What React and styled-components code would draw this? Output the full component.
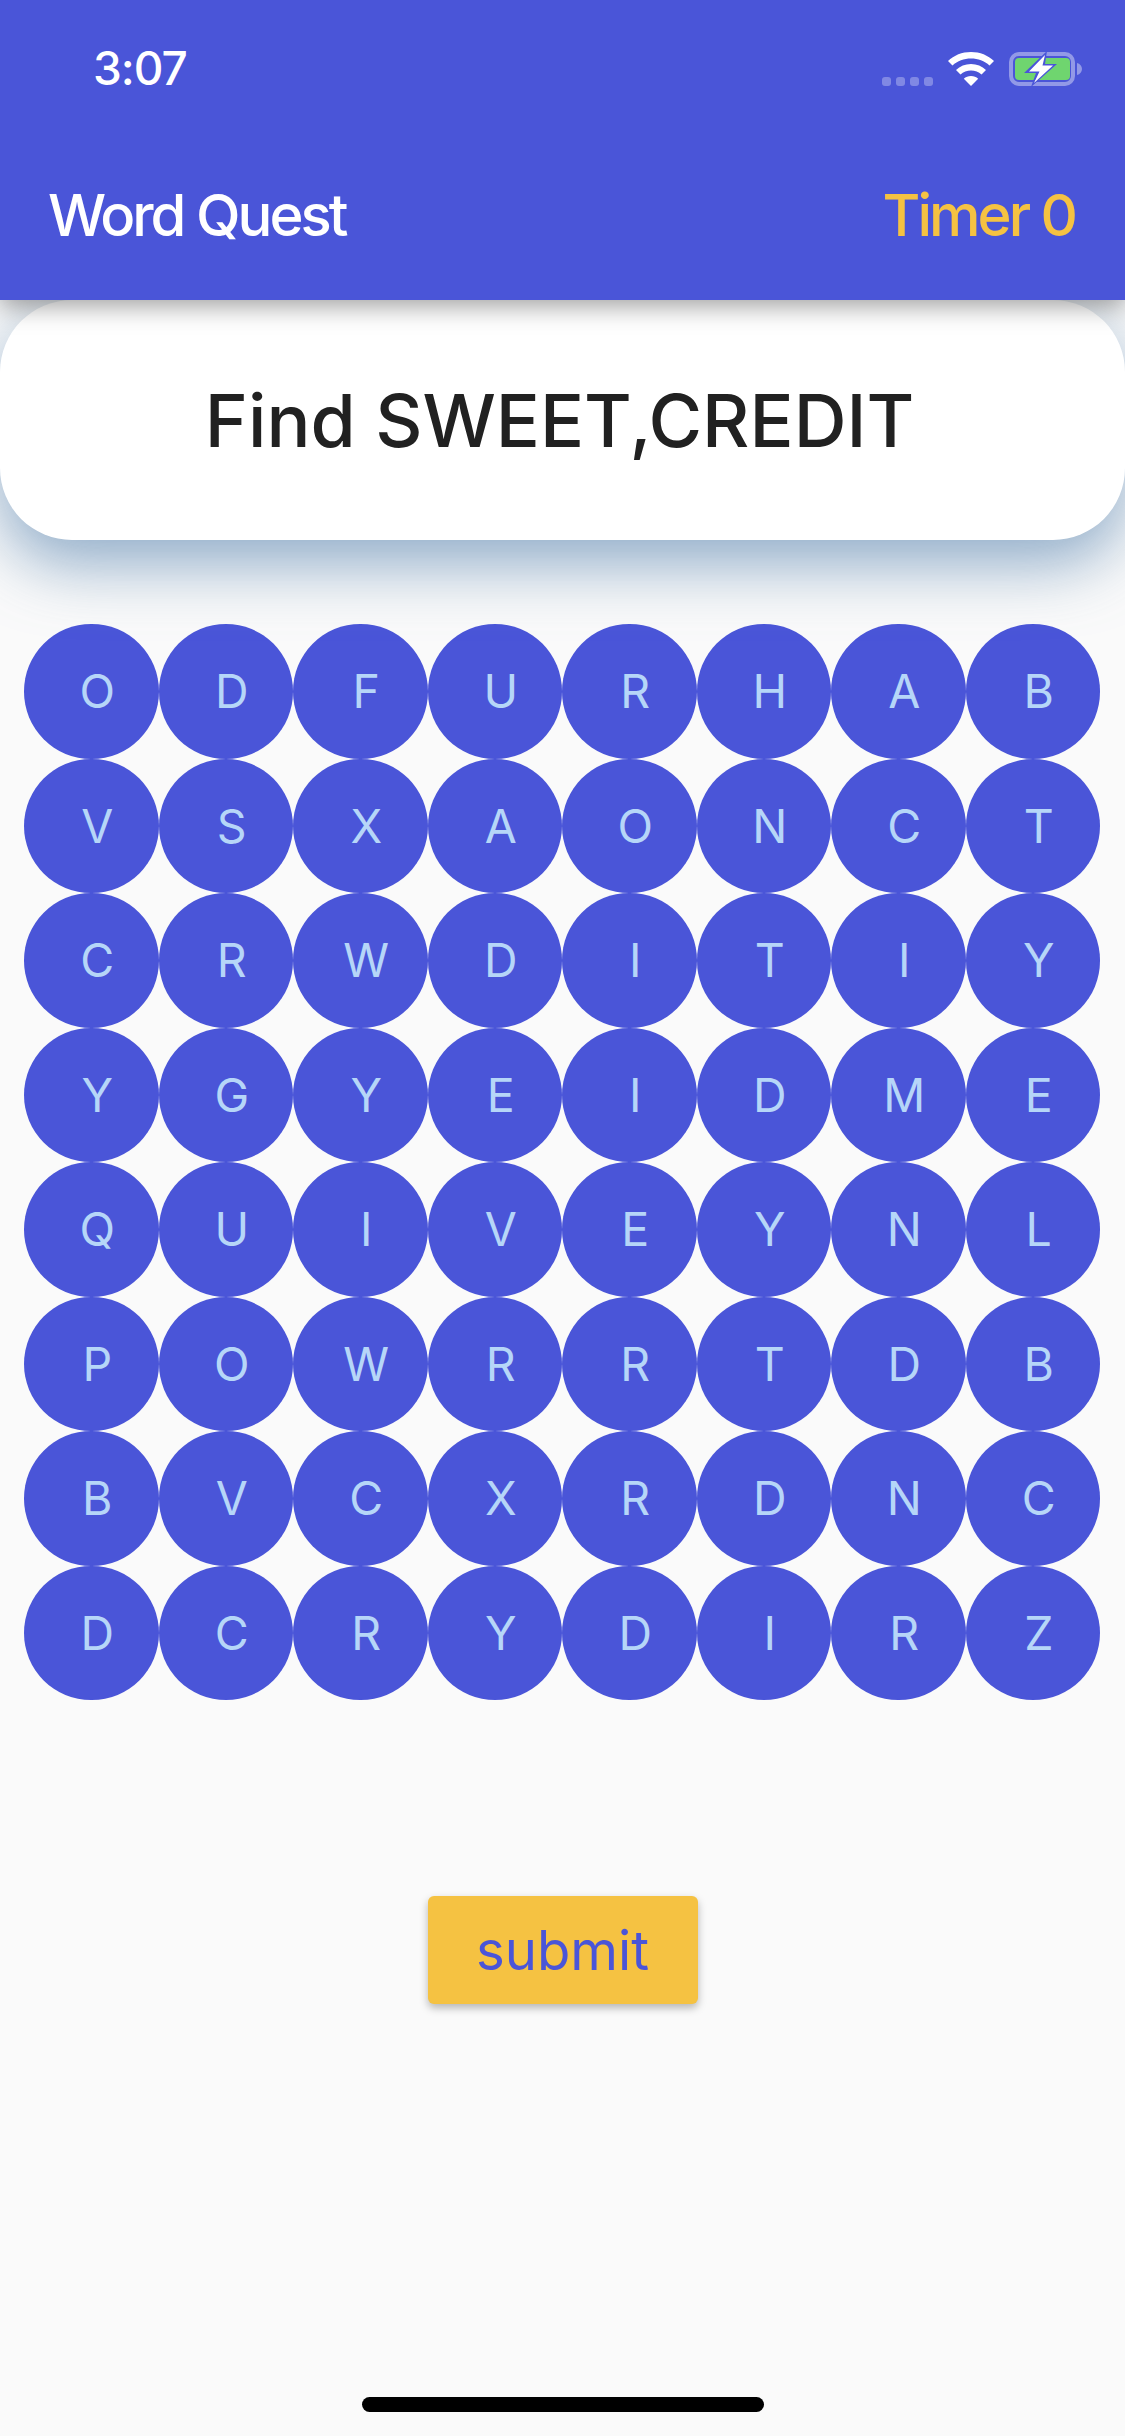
import styled, { createGlobalStyle } from 'styled-components'

const letters = [
  'ODFURHAB',
  'VSXAONCT',
  'CRWDITIY',
  'YGYEIDME',
  'QUIVEYNL',
  'POWRRTDB',
  'BVCXRDNC',
  'DCRYDIRZ',
]

function App() {
  return (
    <Page>
      <GlobalStyle />
      <Header>
        <StatusBar>
          <Clock>3:07</Clock>
          <StatusIcons>
            <Signal>
              <i /><i /><i /><i />
            </Signal>
            <WifiIcon />
            <BatteryIcon />
          </StatusIcons>
        </StatusBar>
        <AppBar>
          <Title>Word Quest</Title>
          <Timer>Timer 0</Timer>
        </AppBar>
      </Header>

      <PromptCard>Find SWEET,CREDIT</PromptCard>

      <Board>
        {letters.map((row, r) =>
          row.split('').map((ch, c) => <Cell key={`${r}-${c}`}>{ch}</Cell>)
        )}
      </Board>

      <SubmitRow>
        <SubmitButton>submit</SubmitButton>
      </SubmitRow>

      <HomeIndicator />
    </Page>
  )
}

function WifiIcon() {
  return (
    <svg width="46" height="34" viewBox="0 0 46 34" fill="none">
      <path d="M23 0C14 0 6 3.300 0 9l4.500 4.500C9.500 8.800 16 6.500 23 6.500s13.500 2.300 18.500 7L46 9C40 3.300 32 0 23 0z" fill="#fff" />
      <path d="M23 12c-5.800 0-11 2.200-15 6l4.500 4.500C15.300 20 19 18.500 23 18.500s7.700 1.500 10.500 4L38 18c-4-3.800-9.200-6-15-6z" fill="#fff" />
      <path d="M23 24c-2.800 0-5.300 1-7.200 2.800L23 34l7.200-7.200C28.300 25 25.800 24 23 24z" fill="#fff" />
    </svg>
  )
}

function BatteryIcon() {
  return (
    <svg width="73" height="34" viewBox="0 0 73 34" fill="none">
      <rect x="2" y="2" width="62" height="30" rx="8" stroke="#fff" strokeOpacity="0.4" strokeWidth="4" />
      <rect x="6" y="6" width="55" height="22" rx="4" fill="#6fd56f" />
      <path d="M68 11c3 .8 5 3 5 6s-2 5.200-5 6z" fill="#fff" fillOpacity="0.4" />
      <path d="M38 -1L15 21h12l-5 14 26-23H36z" fill="#4a55d8" />
      <path d="M36 3L20 19.500h10.500L25 31 44 13.500H33.500z" fill="#fff" />
    </svg>
  )
}

export default App

const GlobalStyle = createGlobalStyle`
  html, body {
    margin: 0;
    padding: 0;
    background: #fafafa;
  }
`

const Page = styled.div`
  width: 1125px;
  height: 2436px;
  overflow: hidden;
  display: flex;
  flex-direction: column;
  background: #fafafa;
  font-family: Inter, "Liberation Sans", sans-serif;
`

const Header = styled.header`
  position: relative;
  z-index: 2;
  height: 300px;
  flex: none;
  box-sizing: border-box;
  background: #4a55d8;
  box-shadow: 0 6px 24px rgba(0, 0, 0, 0.38);
`

const StatusBar = styled.div`
  height: 138px;
  box-sizing: border-box;
  padding: 45px 43px 0 93px;
  display: flex;
  justify-content: space-between;
  align-items: flex-start;
`

const Clock = styled.span`
  font-size: 46px;
  font-weight: 500;
  line-height: 46px;
  letter-spacing: -1px;
  color: #fff;
`

const StatusIcons = styled.div`
  display: flex;
  align-items: flex-end;
  gap: 15px;
  padding-top: 7px;
`

const Signal = styled.div`
  display: flex;
  gap: 5px;
  i {
    display: block;
    width: 9px;
    height: 9px;
    border-radius: 3px;
    background: rgba(255, 255, 255, 0.3);
  }
`

const AppBar = styled.div`
  display: flex;
  justify-content: space-between;
  padding: 44px 50px 0 48px;
  font-size: 58px;
  font-weight: 500;
  line-height: 66px;
  letter-spacing: -3px;
`

const Title = styled.span`
  color: #fff;
`

const Timer = styled.span`
  color: #f5c242;
`

const PromptCard = styled.div`
  position: relative;
  z-index: 1;
  flex: none;
  height: 240px;
  box-sizing: border-box;
  padding-right: 6px;
  display: flex;
  align-items: center;
  justify-content: center;
  background: #fff;
  border-radius: 72px;
  box-shadow: 0 24px 64px rgba(100, 140, 180, 0.72);
  color: #212121;
  font-size: 73.200px;
  font-weight: 450;
`

const Board = styled.div`
  display: grid;
  grid-template-columns: repeat(8, 134.500px);
  grid-auto-rows: 134.500px;
  padding: 84px 0 0 24px;
`

const Cell = styled.div`
  box-sizing: border-box;
  display: flex;
  align-items: center;
  justify-content: center;
  padding-left: 12px;
  border-radius: 50%;
  background: #4a55d8;
  color: #b6d6f8;
  font-size: 46.500px;
  font-weight: 380;
`

const SubmitRow = styled.div`
  display: flex;
  justify-content: center;
  padding-top: 196px;
`

const SubmitButton = styled.button`
  width: 270px;
  height: 108px;
  border: 0;
  padding: 0;
  border-radius: 6px;
  background: #f5c242;
  box-shadow: 0 4px 8px rgba(0, 0, 0, 0.28);
  color: #4a55d8;
  font-family: inherit;
  font-size: 54.500px;
  font-weight: 400;
`

const HomeIndicator = styled.div`
  margin: auto auto 24px;
  width: 402px;
  height: 15px;
  border-radius: 8px;
  background: #000;
`
